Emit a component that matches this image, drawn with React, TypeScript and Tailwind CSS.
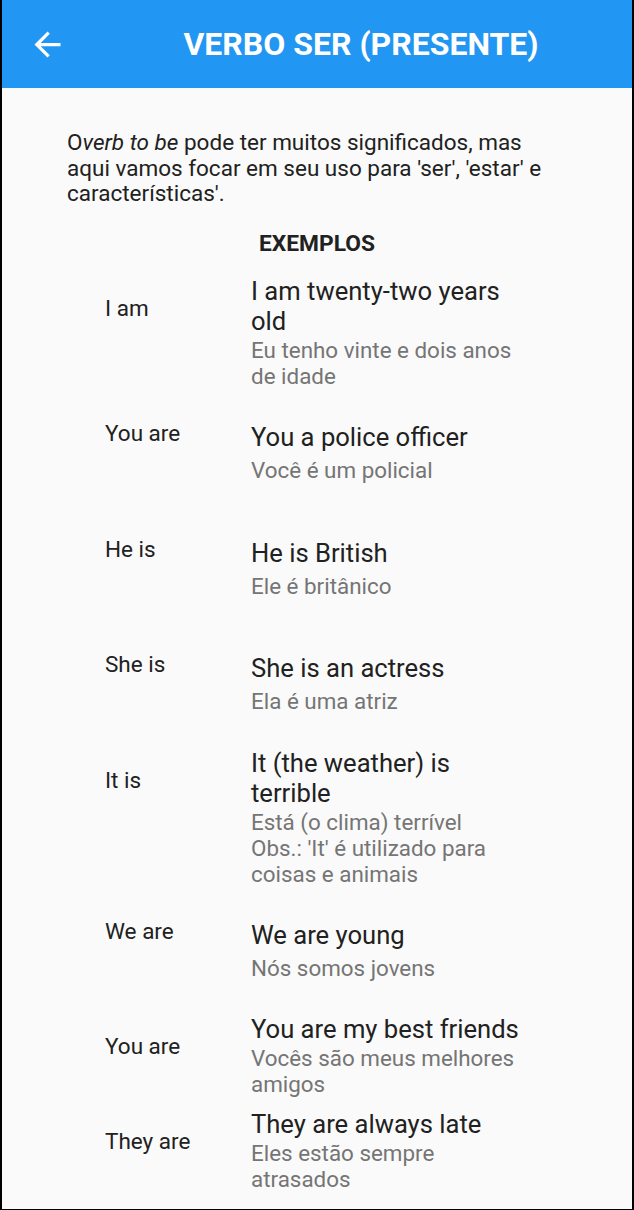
const examples = [
  { pronoun: "I am", en: "I am twenty-two years old", pt: ["Eu tenho vinte e dois anos de idade"], tall: true },
  { pronoun: "You are", en: "You a police officer", pt: ["Você é um policial"], tall: false },
  { pronoun: "He is", en: "He is British", pt: ["Ele é britânico"], tall: false },
  { pronoun: "She is", en: "She is an actress", pt: ["Ela é uma atriz"], tall: false },
  {
    pronoun: "It is",
    en: "It (the weather) is terrible",
    pt: ["Está (o clima) terrível", "Obs.: 'It' é utilizado para coisas e animais"],
    tall: true,
  },
  { pronoun: "We are", en: "We are young", pt: ["Nós somos jovens"], tall: false },
  { pronoun: "You are", en: "You are my best friends", pt: ["Vocês são meus melhores amigos"], tall: true },
  { pronoun: "They are", en: "They are always late", pt: ["Eles estão sempre atrasados"], tall: true },
];

function BackArrow() {
  return (
    <svg width="39" height="39" viewBox="0 0 24 24" fill="white" aria-hidden="true">
      <path d="M20 11H7.83l5.59-5.59L12 4l-8 8 8 8 1.41-1.41L7.83 13H20v-2z" />
    </svg>
  );
}

export default function App() {
  return (
    <div className="h-[1210px] w-[634px] overflow-hidden border-x-2 border-b border-black bg-[#fafafa] font-['Roboto',sans-serif]">
      <header className="flex h-[88px] items-center bg-[#2196f3]">
        <div className="flex w-[88px] items-center pl-[25.5px]">
          <BackArrow />
        </div>
        <h1 className="flex-1 text-center text-[32px] font-bold leading-[38px] text-white">
          VERBO SER (PRESENTE)
        </h1>
      </header>

      <main>
        <p className="px-[65px] pt-[42px] text-[22.5px] leading-[25.5px] text-[#212121]">
          O<em>verb to be</em> pode ter muitos significados, mas aqui vamos focar em seu uso para
          'ser', 'estar' e características'.
        </p>

        <h2 className="mt-[23px] text-center text-[22.75px] font-bold leading-[27px] text-[#212121]">
          EXEMPLOS
        </h2>

        <ul className="mt-[11.5px] px-[103px]">
          {examples.map((ex, i) => (
            <li key={i} className={ex.tall ? "flex" : "flex h-[115.5px]"}>
              <span className="w-[146px] shrink-0 pt-[28px] text-[22.5px] leading-[25px] text-[#212121]">
                {ex.pronoun}
              </span>
              <div className={ex.tall ? "flex-1 pt-2 pb-1" : "flex-1 pt-[29px]"}>
                <p className="text-[25.6px] leading-[30px] text-[#212121]">{ex.en}</p>
                <div className={ex.tall ? "mt-px" : "mt-[5px]"}>
                  {ex.pt.map((line) => (
                    <p key={line} className="text-[22.4px] leading-[26px] text-[#757575]">
                      {line}
                    </p>
                  ))}
                </div>
              </div>
            </li>
          ))}
        </ul>
      </main>
    </div>
  );
}
